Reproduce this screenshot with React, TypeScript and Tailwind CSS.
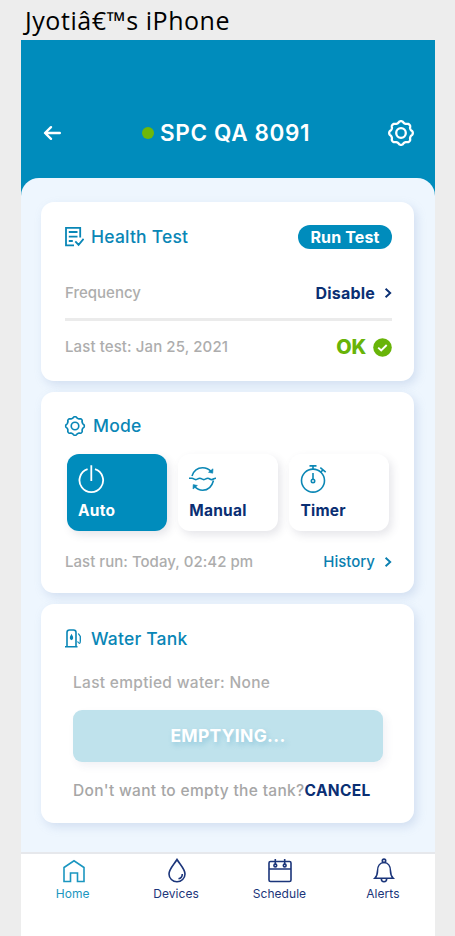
import React from "react";

/** Outline of an eight-lobed cog centred on (14, 14). */
function cogPath(base: number, depth: number): string {
  const points: string[] = [];
  for (let i = 0; i < 160; i++) {
    const a = (i / 160) * Math.PI * 2;
    const r = base + depth * Math.tanh(1.3 * Math.cos(8 * a));
    points.push(`${(14 + r * Math.cos(a)).toFixed(2)} ${(14 + r * Math.sin(a)).toFixed(2)}`);
  }
  return `M${points.join("L")}Z`;
}

const COG = cogPath(11, 0.95);

function Cog({ className, stroke }: { className: string; stroke: number }) {
  return (
    <svg viewBox="0 0 28 28" className={className} fill="none" stroke="currentColor" strokeWidth={stroke} strokeLinejoin="round">
      <path d={COG} />
      <circle cx="14" cy="14" r="4.8" />
    </svg>
  );
}

function Chevron() {
  return (
    <svg viewBox="0 0 8 12" className="h-3 w-2" fill="none" stroke="currentColor" strokeWidth="1.9">
      <path d="M1.6 1.8 6.2 6 1.6 10.2" />
    </svg>
  );
}

function Card({ className, children }: { className: string; children: React.ReactNode }) {
  return (
    <section className={`flex flex-col rounded-[13px] bg-white shadow-[3px_4px_10px_rgba(140,165,210,0.28)] ${className}`}>
      {children}
    </section>
  );
}

function Tile({ label, active, children }: { label: string; active?: boolean; children: React.ReactNode }) {
  return (
    <button
      className={`flex h-[77px] w-[100px] flex-col items-start rounded-[12px] pt-[10px] pl-[11px] shadow-[3px_4px_8px_rgba(60,60,90,0.13)] ${
        active ? "bg-[#008cbc] text-white" : "bg-white text-[#0a2f73]"
      }`}
    >
      {children}
      <span className="mt-[7px] text-[15.5px] leading-5 font-bold tracking-[0.25px]">{label}</span>
    </button>
  );
}

function Tab({ label, active, children }: { label: string; active?: boolean; children: React.ReactNode }) {
  return (
    <div className={`flex w-[103.4px] flex-col items-center ${active ? "text-[#1b96c0]" : "text-[#1b357a]"}`}>
      {children}
      <span className="mt-[2px] text-[12px] leading-4 tracking-[0.05px]">{label}</span>
    </div>
  );
}

export default function App() {
  return (
    <div className="flex h-[936px] w-[455px] flex-col overflow-hidden bg-[#ededed] pl-[21px] font-['Inter',sans-serif] whitespace-nowrap">
      <h1 className="h-10 pt-[4px] pl-[4px] font-['Open_Sans','Noto_Sans',sans-serif] text-[25px] leading-8 tracking-[0.55px] text-black">
        Jyotiâ€™s iPhone
      </h1>

      <div className="flex h-[896px] w-[414px] flex-col bg-white">
        <div className="flex h-[812px] flex-col bg-[linear-gradient(#008cbc_160px,#eef6fe_160px)]">
          <header className="flex h-[138px] items-center pt-[48px] pl-[22px] text-white">
            <svg viewBox="0 0 18 16" className="h-4 w-[18px]" fill="none" stroke="currentColor" strokeWidth="2.4" strokeLinecap="round" strokeLinejoin="round">
              <path d="M16.800 8H2.200M8 2.200 2 8l6 5.800" />
            </svg>
            <span className="ml-[81px] size-3 rounded-full bg-[#6eb80a]" />
            <h2 className="ml-[6px] w-[152px] text-[22.5px] leading-7 font-semibold tracking-[0.65px]">SPC QA 8091</h2>
            <Cog className="ml-[75px] size-[28px]" stroke={2.3} />
          </header>

          <main className="flex flex-1 flex-col rounded-t-[18px] bg-[#eef6fe] px-[20px] pt-6">
            <Card className="h-[179px] w-[373px] pr-[22px] pl-[24px]">
              <div className="mt-[23px] flex h-6 items-center text-[#0986b6]">
                <svg viewBox="0 0 20 22" className="-ml-[1px] h-[22px] w-5" fill="none" stroke="currentColor" strokeWidth="1.8">
                  <path d="M16.200 11.500V1.900H2v17.500h8M4.800 6h8.700M4.800 10.600h8.700M4.800 15h4M11.300 15.300l3.300 3.600 5-6" />
                </svg>
                <span className="ml-[7px] flex-1 text-[17.5px] font-medium tracking-[0.2px]">Health Test</span>
                <button className="h-6 w-[94px] rounded-full bg-[#008cbc] text-[16px] leading-6 font-bold tracking-[0.15px] text-white">Run Test</button>
              </div>
              <div className="mt-8 flex h-6 items-center text-[#0a2f73]">
                <span className="flex-1 text-[15px] font-medium text-[#adadad]">Frequency</span>
                <span className="mr-[9px] text-[16px] font-bold tracking-[0.2px]">Disable</span>
                <Chevron />
              </div>
              <div className="mt-[13px] h-[3px] bg-[#ebebeb]" />
              <div className="mt-[14px] flex h-6 items-center text-[#68b408]">
                <span className="flex-1 text-[15px] font-medium tracking-[0.1px] text-[#adadad]">Last test: Jan 25, 2021</span>
                <span className="mr-[7px] text-[20px] font-extrabold tracking-[-0.2px]">OK</span>
                <svg viewBox="0 0 19 19" className="size-[19px]" fill="none">
                  <circle cx="9.5" cy="9.5" r="9.3" fill="currentColor" />
                  <path d="m5.2 9.6 3 2.9L13.7 7" stroke="white" strokeWidth="1.9" />
                </svg>
              </div>
            </Card>

            <Card className="mt-[11px] h-[201px] w-[373px] pr-[22px] pl-[24px]">
              <div className="mt-[22px] flex h-6 items-center text-[#0986b6]">
                <Cog className="-ml-[1px] size-[22px]" stroke={2.1} />
                <span className="ml-[7px] text-[17.5px] font-medium tracking-[0.2px]">Mode</span>
              </div>
              <div className="mt-4 ml-[2px] flex gap-[11.2px]">
                <Tile label="Auto" active>
                  <svg viewBox="0 0 28 30" className="h-[30px] w-7" fill="none" stroke="currentColor" strokeWidth="1.8">
                    <path d="M9.600 5.100A11.800 11.800 0 1 0 17 5.100M13.300 1.200V17" />
                  </svg>
                </Tile>
                <Tile label="Manual">
                  <svg viewBox="0 0 28 30" className="h-[30px] w-7 text-[#0b87b5]" fill="none" stroke="currentColor" strokeWidth="1.6">
                    <path d="M3 12C4.800 6.500 8.800 3.800 13.600 3.800c3.600 0 6.400 1.300 8.600 3.800M24.500 16.500C22.900 22.600 18.700 26.200 13.700 26.200c-3.500 0-6-1.400-8-3.700" />
                    <path d="M0 14.300h3c1.800 0 1.800 1.300 3.800 1.300s2-1.300 4-1.300 2 1.300 4 1.300 2-1.300 4-1.300 2 1.300 3.900 1.300 1.600-1.300 4.300-1.300" />
                    <path d="m24 4.800-.3 4.400-4.200-.9zM4 25l.2-4.400 4.200.9z" fill="currentColor" strokeWidth=".6" />
                  </svg>
                </Tile>
                <Tile label="Timer">
                  <svg viewBox="0 0 28 30" className="h-[30px] w-7 text-[#0b87b5]" fill="none" stroke="currentColor" strokeWidth="1.6">
                    <circle cx="13" cy="16.600" r="11.500" />
                    <path d="M9.500 1.900h7M13 1.700v3.500M20.300 3.700l5.400 4.400M22.800 6l-2.200 2.400M13 9v6.500" />
                    <circle cx="13" cy="17" r="1.700" />
                  </svg>
                </Tile>
              </div>
              <div className="mt-[19px] flex h-6 items-center text-[#0b7fb0]">
                <span className="flex-1 text-[15px] font-medium tracking-[0.03px] text-[#adadad]">Last run: Today, 02:42 pm</span>
                <span className="mr-[9px] text-[15px] font-medium">History</span>
                <Chevron />
              </div>
            </Card>

            <Card className="mt-[11px] h-[219px] w-[373px] pr-[22px] pl-[24px]">
              <div className="mt-[23px] flex h-6 items-center text-[#0986b6]">
                <svg viewBox="0 0 17 20" className="h-5 w-[17px]" fill="none" stroke="currentColor" strokeWidth="1.6">
                  <path d="M2 17V3.500Q2 1 4.500 1h4Q11 1 11 3.500V17M0 17.700h12.500" />
                  <path d="M12.500 12.500q2.800 4 2.800-.5V7.500l-2-3" strokeWidth="1.300" />
                  <path d="M6.500 6q2.200 3.500 0 4.500-2.200-1 0-4.500Z" fill="currentColor" strokeWidth="1.200" />
                </svg>
                <span className="ml-[9px] text-[17.5px] font-medium tracking-[0.2px]">Water Tank</span>
              </div>
              <p className="mt-[20px] ml-2 h-6 text-[15.5px] leading-6 font-medium tracking-[0.3px] text-[#adadad]">Last emptied water: None</p>
              <button className="mt-[15px] ml-2 h-[52px] w-[310px] rounded-[9px] bg-[#bfe2ec] text-[17.5px] leading-[52px] font-bold tracking-[0.3px] text-white shadow-[3px_4px_8px_rgba(60,60,120,0.07)] [text-shadow:2px_3px_5px_rgba(80,165,200,0.4)]">
                EMPTYING...
              </button>
              <p className="mt-[17px] ml-2 flex h-6 items-center text-[15.5px] tracking-[0.32px] text-[#a6a6a6]">
                <span className="font-medium">Don't want to empty the tank?</span>
                <span className="font-bold text-[#0a2f73]">CANCEL</span>
              </p>
            </Card>
          </main>
        </div>

        <nav className="flex flex-1 border-t-2 border-[#e6e8ec] bg-white pt-1">
          <Tab label="Home" active>
            <svg viewBox="0 0 24 26" className="ml-[2px] h-[26px] w-6" fill="none" stroke="currentColor" strokeWidth="1.600">
              <path d="M2 9.500 12 2.800l10 6.700V23.500h-6.500V15h-7v8.500H2Z" />
            </svg>
          </Tab>
          <Tab label="Devices">
            <svg viewBox="0 0 24 26" className="ml-[2px] h-[26px] w-6" fill="none" stroke="currentColor" strokeWidth="1.600">
              <path d="M12 1.500C9 6.500 4 11 4 16a8 7.800 0 0 0 16 0C20 11 15 6.500 12 1.500ZM17.300 16q0 4-3.800 4.800" />
            </svg>
          </Tab>
          <Tab label="Schedule">
            <svg viewBox="0 0 24 26" className="ml-[2px] h-[26px] w-6" fill="none" stroke="currentColor" strokeWidth="1.600">
              <rect x="1" y="3.500" width="22" height="20" rx="1.500" />
              <path d="M1 11h22M7.300 1v5.500M16.700 1v5.500" />
              <circle cx="7.300" cy="7.500" r="1.400" />
              <circle cx="16.700" cy="7.500" r="1.400" />
            </svg>
          </Tab>
          <Tab label="Alerts">
            <svg viewBox="0 0 24 26" className="ml-[2px] h-[26px] w-6" fill="none" stroke="currentColor" strokeWidth="1.600">
              <path d="M2.800 20.300Q5.500 17.500 5.500 13c0-5 2.500-8.500 6.500-8.500s6.500 3.500 6.500 8.500q0 4.500 2.700 7.300ZM9.300 20.500q0 3.300 2.700 3.300t2.700-3.300" />
              <circle cx="12" cy="2.800" r="1.700" />
            </svg>
          </Tab>
        </nav>
      </div>
    </div>
  );
}
